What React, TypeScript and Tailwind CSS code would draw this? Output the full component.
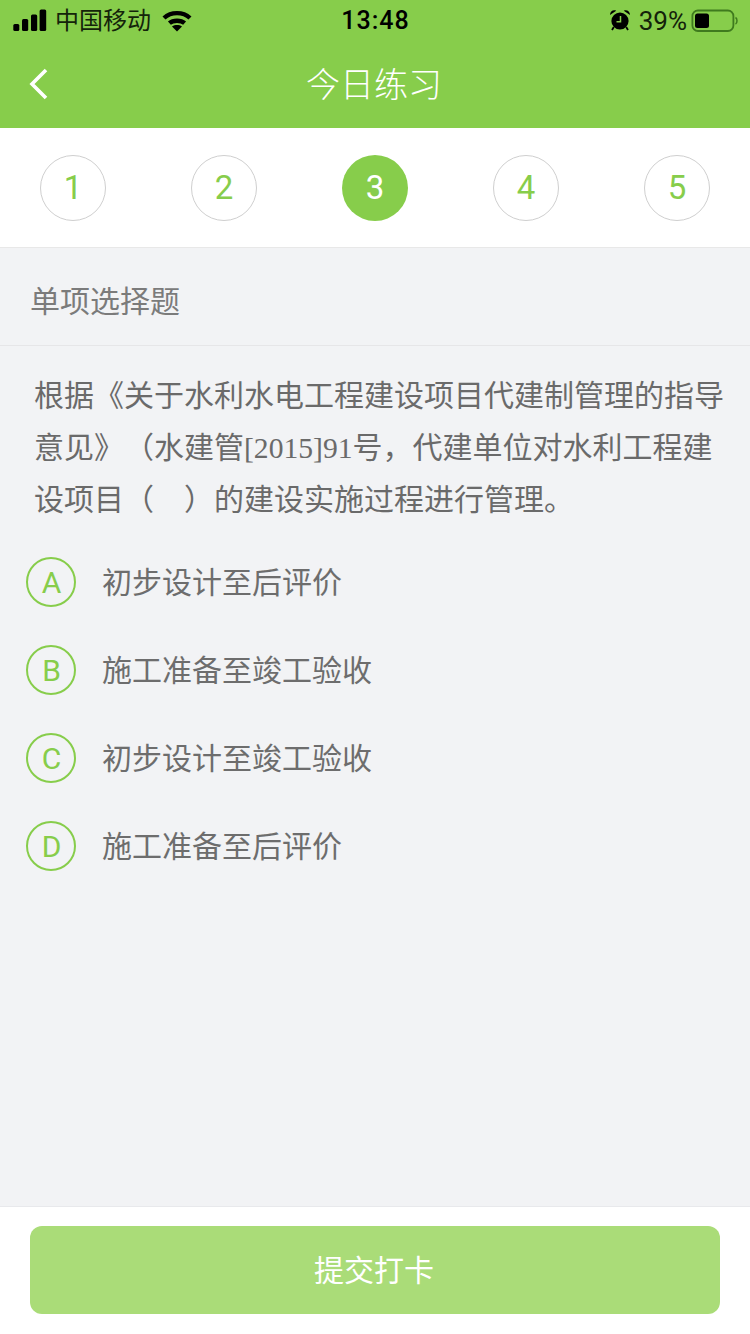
const cjk = "font-['Liberation_Sans','Noto_Sans_CJK_SC',sans-serif] [text-spacing-trim:space-all]";

function Signal() {
  return (
    <svg width="34" height="22" viewBox="0 0 34 22" className="fill-black mb-[3px]">
      <rect x="0.3" y="15" width="6" height="7" rx="1.5" />
      <rect x="9" y="10" width="6.2" height="12" rx="1.5" />
      <rect x="18" y="5.5" width="6.2" height="16.5" rx="1.5" />
      <rect x="26.6" y="0.5" width="6.6" height="21.5" rx="1.5" />
    </svg>
  );
}

function Wifi() {
  return (
    <svg width="30" height="22" viewBox="0 0 30 22" fill="none" stroke="black" strokeWidth="4.4">
      <path d="M2 8 C9 1.5 21 1.5 28 8" />
      <path d="M7.4 13.2 C11 10 19 10 22.6 13.2" />
      <path d="M15 21.5 L10 16.5 C13 14.6 17 14.6 20 16.5 Z" fill="black" stroke="none" />
    </svg>
  );
}

function Alarm() {
  return (
    <svg width="22" height="22" viewBox="0 0 22 22" className="mb-[2px]">
      <circle cx="11" cy="12" r="8.6" fill="black" />
      <path d="M1 6 C1 2 4.5 0.5 7.2 1.8 Z M21 6 C21 2 17.5 0.5 14.8 1.8 Z" fill="black" />
      <path d="M4.8 18 L3 21 M17.2 18 L19 21" stroke="black" strokeWidth="1.8" />
      <path d="M11.5 7 V12.8 H7.5" fill="none" stroke="#87cd4b" strokeWidth="1.5" />
    </svg>
  );
}

function Battery() {
  return (
    <svg width="48" height="24" viewBox="0 0 48 24" fill="none">
      <rect x="2.4" y="1.5" width="41" height="20.5" rx="5.5" stroke="#3f7a1e" strokeWidth="1.8" />
      <rect x="5" y="4.5" width="14" height="14.5" rx="2.5" fill="black" />
      <path d="M45.5 8.5 C47.5 9.5 47.5 14 45.5 15" stroke="#3f7a1e" strokeWidth="1.5" />
    </svg>
  );
}

function Step({ n, active }: { n: number; active?: boolean }) {
  return (
    <div
      className={
        active
          ? "w-[66px] h-[66px] rounded-full bg-[#87cd4b] text-white flex items-center justify-center text-[33px] font-['Roboto'] font-normal"
          : "w-[66px] h-[66px] rounded-full border border-[#cfcfcf] bg-white text-[#87cd4b] flex items-center justify-center text-[33px] font-['Roboto'] font-normal"
      }
    >
      {n}
    </div>
  );
}

function Option({ letter, text }: { letter: string; text: string }) {
  return (
    <div className="h-[88px] flex items-center pl-[26px]">
      <div className="w-[50px] h-[50px] rounded-full border-2 border-[#87cd4b] text-[#87cd4b] flex items-center justify-center text-[30px] shrink-0 font-['Roboto'] font-normal pt-[1px] pl-[1px]">
        {letter}
      </div>
      <div className="ml-[26px] text-[30px] text-[#6d6d6d] leading-[40px] pt-[1px]">{text}</div>
    </div>
  );
}

export default function App() {
  return (
    <div className={`w-[750px] h-[1334px] bg-[#f2f3f5] flex flex-col overflow-hidden ${cjk}`}>
      <div className="h-[128px] bg-[#87cd4b] shrink-0 flex flex-col">
        <div className="h-[42px] flex items-center justify-between pl-[13px] pr-[12px] text-black">
          <div className="flex items-center w-[220px]">
            <Signal />
            <span className="ml-[8px] text-[24px] text-[#14240a] leading-none">中国移动</span>
            <span className="ml-[11px] flex"><Wifi /></span>
          </div>
          <div className="text-[25px] font-['Roboto'] font-medium tracking-[1px] text-black">13:48</div>
          <div className="flex items-center w-[220px] justify-end">
            <Alarm />
            <span className="ml-[8px] text-[26px] text-[#13220a] font-['Roboto'] font-normal">39%</span>
            <span className="flex ml-[3px]"><Battery /></span>
          </div>
        </div>
        <div className="flex-1 flex items-center relative pb-[2px]">
          <svg width="20" height="32" viewBox="0 0 20 32" fill="none" stroke="white" strokeWidth="3.6" className="ml-[29px]">
            <path d="M17 2 L3 16 L17 30" />
          </svg>
          <div className="absolute inset-x-0 top-[21px] text-center text-[34px] leading-[44px] text-white font-light pr-[2px]">今日练习</div>
        </div>
      </div>

      <div className="h-[120px] bg-white border-b border-[#e8e8e8] shrink-0 flex items-center justify-between px-[40px]">
        <Step n={1} />
        <Step n={2} />
        <Step n={3} active />
        <Step n={4} />
        <Step n={5} />
      </div>

      <div className="h-[98px] shrink-0 border-b border-[#e6e6e8] flex items-center pl-[30px] pt-[9px] text-[30px] text-[#7b7b7b]">
        单项选择题
      </div>

      <div className="flex-1 flex flex-col">
        <div className="pl-[34px] pr-[20px] pt-[24px] text-[30px] leading-[52px] text-[#6a6a6a]">
          <div>根据《关于水利水电工程建设项目代建制管理的指导</div>
          <div>
            意见》（水建管<span className="font-['Liberation_Serif'] text-[29.6px]">[2015]91</span>号，代建单位对水利工程建
          </div>
          <div>设项目（　）的建设实施过程进行管理。</div>
        </div>
        <div className="pt-[12px]">
          <Option letter="A" text="初步设计至后评价" />
          <Option letter="B" text="施工准备至竣工验收" />
          <Option letter="C" text="初步设计至竣工验收" />
          <Option letter="D" text="施工准备至后评价" />
        </div>
      </div>

      <div className="h-[128px] bg-white border-t border-[#e8e9ec] shrink-0 px-[30px] pt-[19px]">
        <div className="h-[88px] rounded-[12px] bg-[#aadc78] text-white text-[30px] flex items-center justify-center pr-[2px]">
          提交打卡
        </div>
      </div>
    </div>
  );
}
